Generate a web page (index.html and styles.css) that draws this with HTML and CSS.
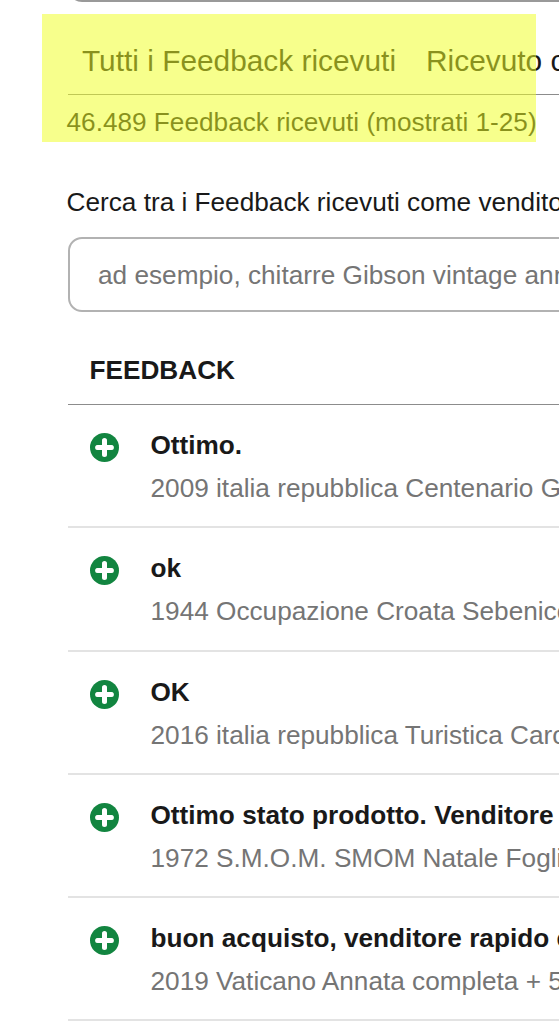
FILE: index.html
```
<!DOCTYPE html>
<html lang="it">
<head>
  <meta charset="UTF-8" />
  <meta name="viewport" content="width=device-width, initial-scale=1.0" />
  <title>Feedback ricevuti</title>
  <link rel="stylesheet" href="styles.css">
</head>
<body>
  <svg class="sprite" aria-hidden="true">
    <symbol id="positive" viewBox="0 0 29 29">
      <circle cx="14.5" cy="14.5" r="14.5" fill="#128540" />
      <path d="M14.5 7.6v13.8M7.6 14.5h13.8" stroke="#fff" stroke-width="5" stroke-linecap="round" />
      <path d="M14.5 6v17M6 14.5h17" stroke="#fff" stroke-width="3.4" />
    </symbol>
  </svg>

  <main class="page">
    <div class="panel-end"></div>

    <nav class="tabs">
      <span class="tab">Tutti i Feedback ricevuti</span>
      <span class="tab">Ricevuto come acquirente</span>
    </nav>
    <p class="count">46.489 Feedback ricevuti (mostrati 1-25)</p>

    <!-- Search -->
    <form class="search">
      <label for="q">Cerca tra i Feedback ricevuti come venditore</label>
      <input type="text" id="q" name="q" placeholder="ad esempio, chitarre Gibson vintage anni 60">
    </form>

    <!-- Feedback list -->
    <h2 class="list-header">FEEDBACK</h2>
    <ul class="list">
      <li class="row">
        <svg class="icon"><use href="#positive" /></svg>
        <div class="text">
          <h3>Ottimo.</h3>
          <p>2009 italia repubblica Centenario Giro</p>
        </div>
      </li>
      <li class="row">
        <svg class="icon"><use href="#positive" /></svg>
        <div class="text">
          <h3>ok</h3>
          <p>1944 Occupazione Croata Sebenico</p>
        </div>
      </li>
      <li class="row">
        <svg class="icon"><use href="#positive" /></svg>
        <div class="text">
          <h3>OK</h3>
          <p>2016 italia repubblica Turistica Carovigno</p>
        </div>
      </li>
      <li class="row">
        <svg class="icon"><use href="#positive" /></svg>
        <div class="text">
          <h3>Ottimo stato prodotto. Venditore</h3>
          <p>1972 S.M.O.M. SMOM Natale Foglietto</p>
        </div>
      </li>
      <li class="row">
        <svg class="icon"><use href="#positive" /></svg>
        <div class="text">
          <h3>buon acquisto, venditore rapido e</h3>
          <p>2019 Vaticano Annata completa + 5</p>
        </div>
      </li>
    </ul>
  </main>

  <div class="highlight"></div>
</body>
</html>
```
FILE: styles.css
```
:root {
  --text: #191919;
  --muted: #757575;
  --line: #999;
  --row-line: #e3e3e3;
}

* {
  box-sizing: border-box;
}
html, body {
  margin: 0;
  height: 1024px;
  overflow: hidden;
  background: #fff;
  color: var(--text);
  font-family: 'Liberation Sans', Arial, sans-serif;
  font-size: 26.2px;
  line-height: 30px;
}
h2, h3, p, ul {
  margin: 0;
  padding: 0;
  font-size: inherit;
}
.sprite {
  display: none;
}
.page {
  width: 800px;
  padding-left: 67.5px;
  white-space: nowrap;
}

/* bottom edge of the box above the tabs */
.panel-end {
  height: 76px;
  margin-top: -74px;
  border: 2px solid var(--line);
  border-radius: 14px;
}
.tabs {
  display: flex;
  gap: 30px;
  height: 93px;
  padding: 42px 14.5px 0;
  font-size: 29.85px;
  line-height: 34px;
  border-bottom: 1px solid #8c8c8c;
}
.count {
  padding-top: 12px;
  margin-left: -1px;
}
.search {
  display: flex;
  flex-direction: column;
  padding-top: 50px;
}
.search label {
  margin-left: -1px;
}
.search input {
  height: 75px;
  margin-top: 20px;
  padding: 2px 28.5px 0;
  border: 2px solid #b2b2b2;
  border-radius: 14px;
  background: #fff;
  font: inherit;
  outline: none;
}
.search input::placeholder {
  color: var(--muted);
  opacity: 1;
}
.list-header {
  height: 93px;
  padding: 43px 22px 0;
  font-weight: 700;
  border-bottom: 1px solid #8c8c8c;
}
.list {
  list-style: none;
}
.row {
  display: flex;
  gap: 32px;
  height: 123.3px;
  padding: 25px 22px 0;
  border-bottom: 2px solid var(--row-line);
}
.icon {
  width: 29px;
  height: 29px;
  margin-top: 3px;
}
.text h3 {
  font-weight: 700;
}
.text p {
  margin-top: 13px;
  color: var(--muted);
}

/* marker over the tabs and the count */
.highlight {
  position: absolute;
  top: 14px;
  left: 42px;
  width: 494px;
  height: 128px;
  background: rgba(240, 255, 34, .52);
}
@media (max-width: 400px) {
  .page {
    padding-left: 20px;
  }
}
```
